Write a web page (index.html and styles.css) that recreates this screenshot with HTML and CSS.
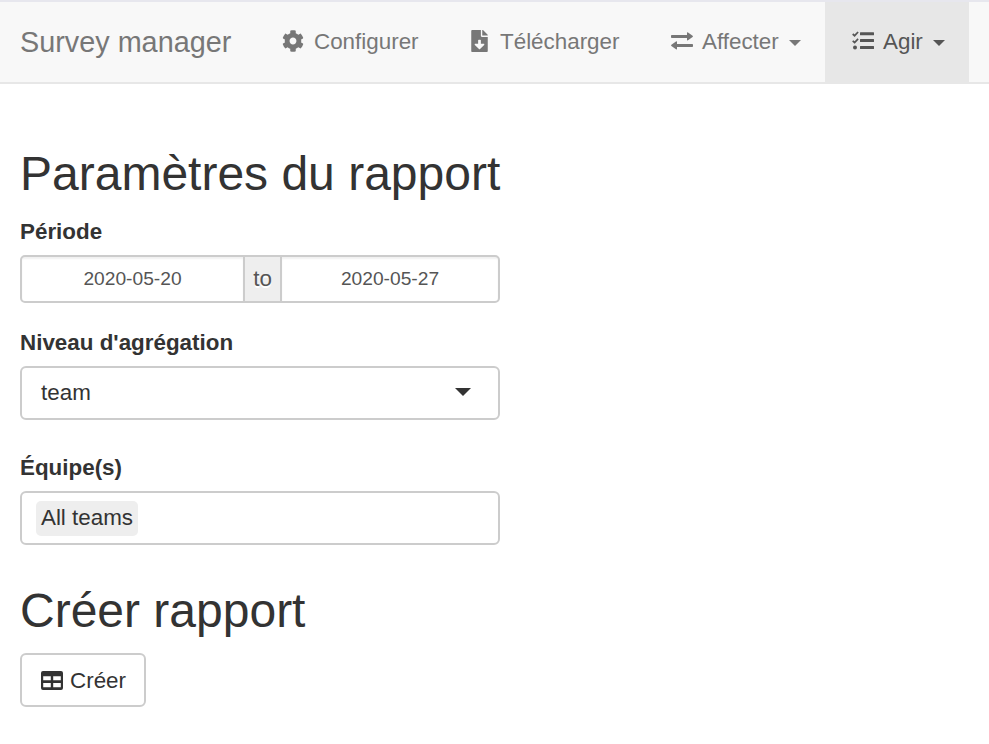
FILE: index.html
```html
<!DOCTYPE html>
<html lang="fr">
<head>
<meta charset="utf-8">
<title>Survey manager</title>
<link rel="stylesheet" href="styles.css">
</head>
<body>
<nav class="navbar">
  <a class="brand">Survey manager</a>
  <a class="item configure"><svg class="icon" viewBox="0 0 512 512"><path d="M487.4 315.7l-42.6-24.6c4.3-23.2 4.3-47 0-70.2l42.6-24.6c4.9-2.8 7.1-8.6 5.5-14-11.1-35.6-30-67.8-54.7-94.6-3.8-4.1-10-5.1-14.8-2.3L380.8 110c-17.9-15.4-38.5-27.3-60.8-35.1V25.8c0-5.6-3.9-10.5-9.4-11.7-36.7-8.2-74.3-7.8-109.2 0-5.5 1.2-9.4 6.1-9.4 11.7V75c-22.2 7.9-42.8 19.8-60.8 35.1L88.7 85.5c-4.9-2.8-11-1.9-14.8 2.3-24.7 26.7-43.6 58.9-54.7 94.6-1.7 5.4.6 11.2 5.5 14L67.3 221c-4.3 23.2-4.3 47 0 70.2l-42.6 24.6c-4.9 2.8-7.1 8.6-5.5 14 11.1 35.6 30 67.8 54.7 94.6 3.8 4.1 10 5.1 14.8 2.3l42.6-24.6c17.9 15.4 38.5 27.3 60.8 35.1v49.2c0 5.6 3.9 10.5 9.4 11.7 36.7 8.2 74.3 7.8 109.2 0 5.5-1.2 9.4-6.1 9.4-11.7v-49.2c22.2-7.9 42.8-19.8 60.8-35.1l42.6 24.6c4.9 2.8 11 1.9 14.8-2.3 24.7-26.7 43.6-58.9 54.7-94.6 1.5-5.5-.7-11.3-5.6-14.1zM256 336c-44.1 0-80-35.9-80-80s35.9-80 80-80 80 35.9 80 80-35.9 80-80 80z"/></svg><span>Configurer</span></a>
  <a class="item download"><svg class="icon file" viewBox="0 0 384 512"><path d="M224 136V0H24C10.700 0 0 10.700 0 24v464c0 13.300 10.700 24 24 24h336c13.300 0 24-10.700 24-24V160H248c-13.200 0-24-10.800-24-24zm76.450 211.360l-96.420 95.700c-6.650 6.610-17.390 6.610-24.040 0l-96.420-95.700C73.420 337.290 80.540 320 94.820 320H160v-80c0-8.840 7.160-16 16-16h32c8.840 0 16 7.160 16 16v80h65.180c14.280 0 21.400 17.290 11.270 27.360zM377 105L279.100 7c-4.500-4.500-10.600-7-17-7H256v128h128v-6.100c0-6.300-2.500-12.400-7-16.900z"/></svg><span>Télécharger</span></a>
  <a class="item assign"><svg class="icon" viewBox="0 0 22 22"><path d="M.8 5H16V3q0-1.300 1-.4l4.600 3.200q.6.600 0 1.200L17 10.200q-1 .9-1-.4V8H.8Q0 8 0 7.200V5.800Q0 5 .8 5zM21.200 14H6v-2q0-1.300-1-.4L.4 14.800q-.6.600 0 1.200L5 19.200q1 .9 1-.4V17h15.200q.8 0 .8-.8v-1.400q0-.8-.8-.8z"/></svg><span>Affecter</span><i class="caret"></i></a>
  <a class="item act active"><svg class="icon" viewBox="0 0 22 22"><path d="M8.500 2.200h13q.5 0 .5.500v2q0 .5-.5.500h-13q-.5 0-.5-.5v-2q0-.5.500-.5zm0 6.900h13q.5 0 .5.500v2q0 .5-.5.500h-13q-.5 0-.5-.5v-2q0-.5.500-.5zm0 6.900h13q.5 0 .5.500v2q0 .5-.5.500h-13q-.5 0-.5-.5v-2q0-.5.500-.5z"/><circle cx="3" cy="17.600" r="2"/><path class="check" d="M.7 4l1.900 1.700L6.100 2M.7 10.800l1.900 1.700 3.500-3.700"/></svg><span>Agir</span><i class="caret"></i></a>
</nav>
<main class="content">
  <h2>Paramètres du rapport</h2>
  <label>Période</label>
  <div class="dates"><div class="date">2020-05-20</div><div class="to">to</div><div class="date">2020-05-27</div></div>
  <label class="level">Niveau d'agrégation</label>
  <div class="field select"><span>team</span><i class="caret large"></i></div>
  <label class="teams">Équipe(s)</label>
  <div class="field tags"><span class="tag">All teams</span></div>
  <h2 class="create">Créer rapport</h2>
  <button class="button"><svg class="icon" viewBox="0 0 22 22"><path fill-rule="evenodd" d="M2 1h18q2 0 2 2v15q0 2-2 2H2q-2 0-2-2V3q0-2 2-2zm.2 5.200v4h7.600v-4zm10 0v4h7.600v-4zm-10 6.800v4.200h7.600V13zm10 0v4.200h7.600V13z"/></svg><span>Créer</span></button>
</main>
</body>
</html>
```
FILE: styles.css
```css
* { box-sizing: border-box; }
body {
  margin: 0;
  background: #fff;
  color: #333;
  font: 22.4px/32px "Liberation Sans", Arial, sans-serif;
}
.navbar {
  display: flex;
  height: 84px;
  background: #f8f8f8;
  border-top: 2px solid #e7e7ee;
  border-bottom: 2px solid #e7e7e7;
  color: #777;
}
.brand {
  width: 258px;
  padding: 24px 0 0 20px;
  font-size: 28.8px;
  white-space: nowrap;
}
.item {
  display: flex;
  align-items: flex-start;
  padding: 24px 0 0 24px;
  height: 82px;
  white-space: nowrap;
}
.configure { width: 189px; }
.download { width: 199px; padding-left: 24px; }
.assign { width: 179px; padding-left: 25px; }
.act { width: 144px; padding-left: 27px; }
.active { background: #e7e7e7; color: #555; }
.icon {
  width: 22px;
  height: 22px;
  margin: 4px 9px 0 0;
  fill: currentColor;
  flex: none;
}
.configure .icon { margin-right: 10px; }
.file { width: 17px; margin-right: 12px; }
.check { fill: none; stroke: currentColor; stroke-width: 1.7; }
.caret {
  border: 6.400px solid transparent;
  border-top-color: currentColor;
  border-bottom: 0;
  margin: 14px 0 0 10px;
}
.content { width: 500px; padding: 63px 0 0 20px; }
h2 {
  margin: 0;
  font-size: 48px;
  line-height: 54px;
  font-weight: 400;
  white-space: nowrap;
}
label {
  display: block;
  margin-top: 15px;
  margin-bottom: 7px;
  font-weight: 700;
}
.dates {
  display: grid;
  grid-template-columns: 221px 39px 1fr;
  height: 48px;
  border: 2px solid #ccc;
  border-radius: 5px;
  color: #555;
  line-height: 44px;
  text-align: center;
  overflow: hidden;
}
.date { font-size: 19.200px; box-shadow: inset 0 2px 2px rgba(0, 0, 0, .06); }
.to {
  background: #eee;
  border-left: 2px solid #ccc;
  border-right: 2px solid #ccc;
  text-shadow: 0 2px 0 #fff;
}
.level { margin-top: 24px; }
.field {
  display: flex;
  height: 54px;
  border: 2px solid #ccc;
  border-radius: 6px;
}
.select { justify-content: space-between; padding: 9px 27px 0 19px; }
.large { border-width: 8px 8px 0; margin: 11px 0 0; align-self: flex-start; }
.teams { margin-top: 32px; }
.tags { padding: 8px 14px; }
.tag {
  height: 35px;
  width: 102px;
  background: #eee;
  border-radius: 5px;
  text-align: center;
  line-height: 34px;
}
.create { margin-top: 39px; }
.button {
  display: flex;
  width: 126px;
  height: 54px;
  margin-top: 15px;
  padding: 10px 0 0 19px;
  border: 2px solid #ccc;
  border-radius: 6px;
  background: #fff;
  color: #333;
  font: inherit;
}
.button .icon { margin: 5px 7px 0 0; }
```
